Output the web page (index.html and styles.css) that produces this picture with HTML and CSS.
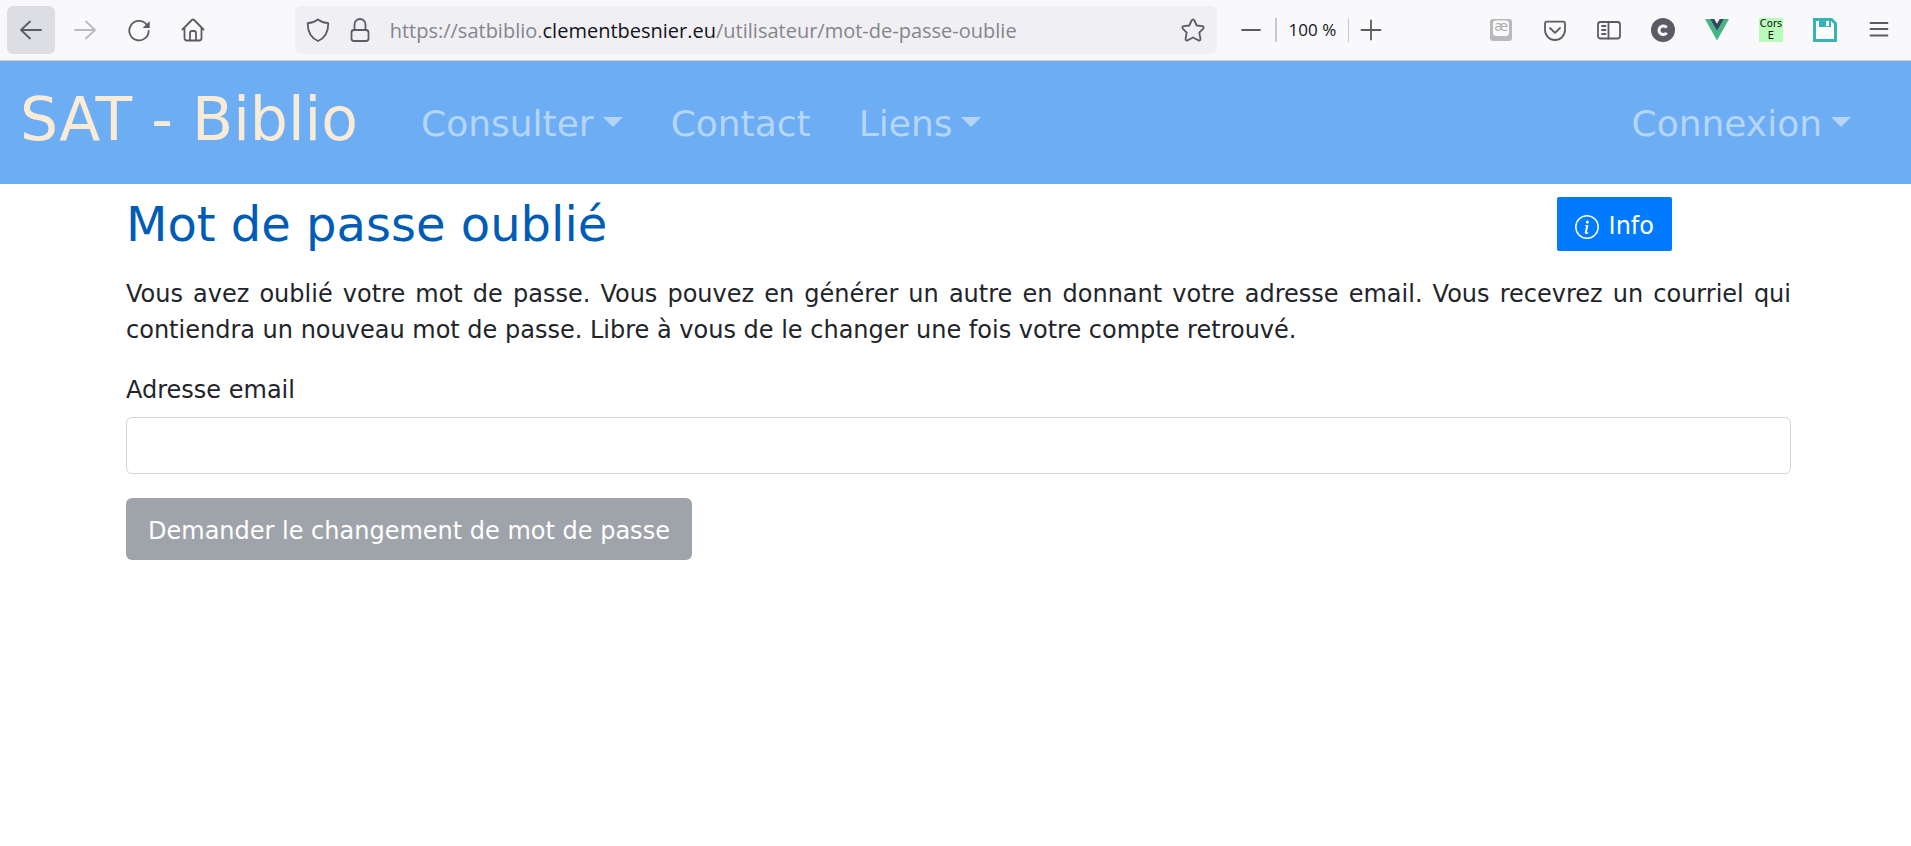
FILE: index.html
```html
<!DOCTYPE html>
<html lang="fr">
<head>
<meta charset="utf-8">
<meta name="viewport" content="width=device-width, initial-scale=1">
<title>SAT - Biblio</title>
<link rel="stylesheet" href="styles.css">
</head>
<body>
<div class="toolbar" role="toolbar" aria-label="Navigation">
  <div class="tools">
    <button class="tool tool-active" type="button" aria-label="Page précédente"><svg class="icon" viewBox="0 0 24 24"><path d="M22 12H2M11 3.500L2 12l9 8.500"/></svg></button>
    <button class="tool tool-muted" type="button" aria-label="Page suivante"><svg class="icon" viewBox="0 0 24 24"><path d="M2 12h20M13 3.500L22 12l-9 8.500"/></svg></button>
    <button class="tool" type="button" aria-label="Actualiser"><svg class="icon" viewBox="0 0 24 24"><path d="M19.500 6.500A9.700 9.700 0 1 0 21.700 13"/><path class="solid" d="M22.700 3v7h-7z"/></svg></button>
    <button class="tool" type="button" aria-label="Accueil"><svg class="icon" viewBox="0 0 24 24"><path d="M1.500 11.500L10.800 2q1.200-1 2.400 0l9.300 9.500M3.500 10v10q0 2.500 2.500 2.500h12q2.500 0 2.500-2.500V10M9 22.500V15q0-2 2-2h2q2 0 2 2v7.500"/></svg></button>
  </div>
  <div class="spacer"></div>
  <div class="address">
    <button class="glyph" type="button" aria-label="Protection"><svg class="icon" viewBox="0 0 24 24"><path d="M12 1.500c3 2.300 6.500 3.400 10.300 3.700C22.300 13 20 19.500 12 23 4 19.500 1.700 13 1.700 5.200 5.500 4.900 9 3.800 12 1.500z"/></svg></button>
    <button class="glyph" type="button" aria-label="Connexion sécurisée"><svg class="icon" viewBox="0 0 24 24"><rect x="3.500" y="12" width="17" height="11" rx="2.500"/><path d="M6.500 12V6.500a5.500 5.500 0 0 1 11 0V12"/></svg></button>
    <span class="url">https://satbiblio.<span class="domain">clementbesnier.eu</span>/utilisateur/mot-de-passe-oublie</span>
    <button class="glyph" type="button" aria-label="Marquer cette page"><svg class="icon" viewBox="0 0 24 24"><path d="M10.600 2.500q1.400-2.200 2.800 0l2.300 5 5.500.7q2.400.6 1 2.400L18.300 14.700l1.100 5.900q.2 2.500-2.100 1.700L12 19.500l-5.300 2.800q-2.300.8-2.100-1.700l1.100-5.900L1.800 10.600q-1.400-1.800 1-2.400l5.500-.7z"/></svg></button>
  </div>
  <div class="zoom">
    <button class="zoom-step" type="button" aria-label="Zoom arrière"><svg class="icon" viewBox="0 0 24 24"><path d="M3 12h18"/></svg></button>
    <button class="zoom-level" type="button">100 %</button>
    <button class="zoom-step" type="button" aria-label="Zoom avant"><svg class="icon" viewBox="0 0 24 24"><path d="M2.500 12h19M12 2.500v19"/></svg></button>
  </div>
  <div class="spacer spacer-end"></div>
  <div class="tools">
    <button class="tool" type="button" aria-label="Caractères"><svg class="icon" viewBox="0 0 24 24"><rect x="1" y="1" width="22" height="22" rx="3" fill="#b9b9bc" stroke="none"/><rect x="4" y="2.500" width="16" height="15.500" rx="3" fill="#f9f9fb" stroke="none"/><text class="icon-ae" x="12" y="13" text-anchor="middle">æ</text></svg></button>
    <button class="tool" type="button" aria-label="Pocket"><svg class="icon" viewBox="0 0 24 24"><path d="M4 3.700h16q2 0 2 2V12a10 10 0 0 1-20 0V5.700q0-2 2-2zM7 10l5 4.800L17 10"/></svg></button>
    <button class="tool" type="button" aria-label="Panneau latéral"><svg class="icon" viewBox="0 0 24 24"><rect x="1" y="4" width="22" height="16.500" rx="2.500"/><path d="M11.500 4v16.500M5 8h3.500M5 12h3.500M5 16h3.500"/></svg></button>
    <button class="tool" type="button" aria-label="Compte"><svg class="icon" viewBox="0 0 24 24"><circle class="solid" cx="12" cy="12" r="12"/><path d="M15.700 9.700a4.300 4.300 0 1 0 0 5.200" stroke="#f9f9fb" stroke-width="3" stroke-linecap="butt"/></svg></button>
    <button class="tool" type="button" aria-label="Vue"><svg class="icon" viewBox="0 0 24 24"><path d="M0 1h5l7 12 7-12h5L12 22.500z" fill="#41b883" stroke="none"/><path d="M5 1h4.300L12 5.700 14.700 1H19l-7 12z" fill="#35495e" stroke="none"/></svg></button>
    <button class="tool" type="button" aria-label="Cors"><span class="cors">Cors<br>E</span></button>
    <button class="tool" type="button" aria-label="Enregistrer"><svg class="icon" viewBox="0 0 24 24"><path d="M0 0h19l5 5v19H0z" fill="#35b3b5" stroke="none"/><path d="M3 3h3v6h12V3l3 3v15H3zM13 3h3v5h-3z" fill="#fff" stroke="none"/></svg></button>
    <button class="tool" type="button" aria-label="Menu"><svg class="icon" viewBox="0 0 24 24"><path d="M3.500 5h17M3.500 11h17M3.500 17.500h17"/></svg></button>
  </div>
</div>

<nav class="navbar">
  <a class="brand" href="#">SAT - Biblio</a>
  <a class="nav-link caret" href="#">Consulter</a>
  <a class="nav-link" href="#">Contact</a>
  <a class="nav-link caret" href="#">Liens</a>
  <a class="nav-link caret nav-end" href="#">Connexion</a>
</nav>

<main class="container">
  <header class="heading">
    <h1 class="title">Mot de passe oublié</h1>
    <button class="info" type="button">
      <svg class="info-icon" viewBox="0 0 24 24"><circle cx="12" cy="12" r="11.200" fill="none" stroke="currentColor" stroke-width="1.500"/><circle cx="12.400" cy="6.900" r="1.500" fill="currentColor"/><path d="M13.400 9.900l-3.400.4-.1.600.7.100c.4.100.5.300.4.700l-1.100 5.200c-.3 1.300.2 2 1.200 2 .9 0 1.800-.4 2.300-1l.2-.7c-.3.300-.8.400-1.100.4-.4 0-.6-.3-.5-.8z" fill="currentColor"/></svg>
      <span>Info</span>
    </button>
  </header>
  <p class="intro">Vous avez oublié votre mot de passe. Vous pouvez en générer un autre en donnant votre adresse email. Vous recevrez un courriel qui contiendra un nouveau mot de passe. Libre à vous de le changer une fois votre compte retrouvé.</p>
  <form class="form">
    <label class="label" for="email">Adresse email</label>
    <input class="field" id="email" type="email">
    <button class="submit" type="submit" disabled>Demander le changement de mot de passe</button>
  </form>
</main>
</body>
</html>
```
FILE: styles.css
```css
* { box-sizing: border-box; }

body {
  margin: 0;
  background: #fff;
  color: #212529;
  font-family: Verdana, "DejaVu Sans", sans-serif;
  font-size: 24px;
  line-height: 36px;
}

button, input { font: inherit; }
button { margin: 0; }

/* Browser toolbar */
.toolbar {
  display: flex;
  align-items: center;
  height: 61px;
  padding: 0 8px 0 7px;
  background: #f9f9fb;
  border-bottom: 1px solid #ccc;
  font-family: "Segoe UI", "Open Sans", sans-serif;
}
.tools { display: flex; gap: 6px; }
.tool, .glyph, .zoom-step, .zoom-level {
  display: flex;
  align-items: center;
  justify-content: center;
  padding: 0;
  border: 0;
  background: none;
  color: #5b5b66;
}
.tool { width: 48px; height: 48px; border-radius: 6px; }
.tool-active { background: #dddee3; }
.tool-muted { color: #b9b9be; }
.icon {
  display: block;
  width: 24px;
  height: 24px;
  fill: none;
  stroke: currentColor;
  stroke-width: 1.8;
  stroke-linecap: round;
  stroke-linejoin: round;
}
.solid { fill: currentColor; stroke: none; }
.icon-ae { fill: #aaa; stroke: none; font: 14px "DejaVu Sans", sans-serif; }
.spacer { flex: 12; }
.spacer-end { flex: 13; }
.address {
  display: flex;
  flex: 139;
  align-items: center;
  height: 48px;
  margin-right: 10px;
  padding: 0 12px 0 11px;
  gap: 18px;
  border-radius: 6px;
  background: #f0f0f4;
}
.url {
  flex: 1;
  overflow: hidden;
  padding-top: 2px;
  color: #85858c;
  font-size: 20px;
  white-space: nowrap;
}
.domain { color: #15141a; }
.zoom { display: flex; align-items: center; }
.zoom-step { width: 48px; height: 48px; }
.zoom-level {
  width: 74px;
  height: 24px;
  border: solid #c8c8cc;
  border-width: 0 1px 0 2px;
  color: #15141a;
  font-size: 17px;
  white-space: nowrap;
}
.zoom-step:last-child { width: 44px; }
.cors {
  width: 24px;
  height: 24px;
  background: #b9fcb9;
  color: #111;
  font: 10px/12px "DejaVu Sans", sans-serif;
}

/* Site navigation */
.navbar {
  display: flex;
  align-items: center;
  padding: 13px 60px 20px 20px;
  background: #6cadf3;
}
.brand {
  margin-right: 63px;
  color: #faebd7;
  font-size: 60px;
  line-height: 90px;
  text-decoration: none;
}
.nav-link {
  display: flex;
  align-items: center;
  gap: 9px;
  margin-right: 48px;
  padding-top: 10px;
  color: rgba(255, 255, 255, .5);
  font-size: 36px;
  line-height: 54px;
  text-decoration: none;
}
.caret::after {
  content: "";
  margin-bottom: 4px;
  border: solid transparent;
  border-width: 10px 10px 0;
  border-top-color: currentColor;
}
.nav-end { margin-right: 0; margin-left: auto; }

/* Page content */
.container { padding: 12px 120px 24px 126px; }
.heading {
  display: flex;
  align-items: flex-start;
  justify-content: space-between;
  margin-bottom: 23px;
  padding-right: 119px;
}
.title {
  margin: 0;
  color: #005cb5;
  font-size: 48px;
  font-weight: 400;
  line-height: 57px;
}
.info {
  display: flex;
  align-items: center;
  gap: 10px;
  height: 54px;
  margin-top: 1px;
  padding: 3px 18px 0;
  border: 0;
  border-radius: 2px;
  background: #007bff;
  color: #fff;
}
.info-icon { width: 24px; height: 24px; margin-top: 3px; }
.intro { margin: 0 0 24px; text-align: justify; }
.form { display: flex; flex-direction: column; align-items: flex-start; }
.label { margin-bottom: 9px; }
.field {
  width: 100%;
  height: 57px;
  margin-bottom: 24px;
  padding: 9px 18px;
  border: 1px solid #ced4da;
  border-radius: 6px;
  background: #fff;
}
.submit {
  padding: 15px 22px 11px;
  border: 0;
  border-radius: 6px;
  background: #9fa4aa;
  color: #fff;
}
```
